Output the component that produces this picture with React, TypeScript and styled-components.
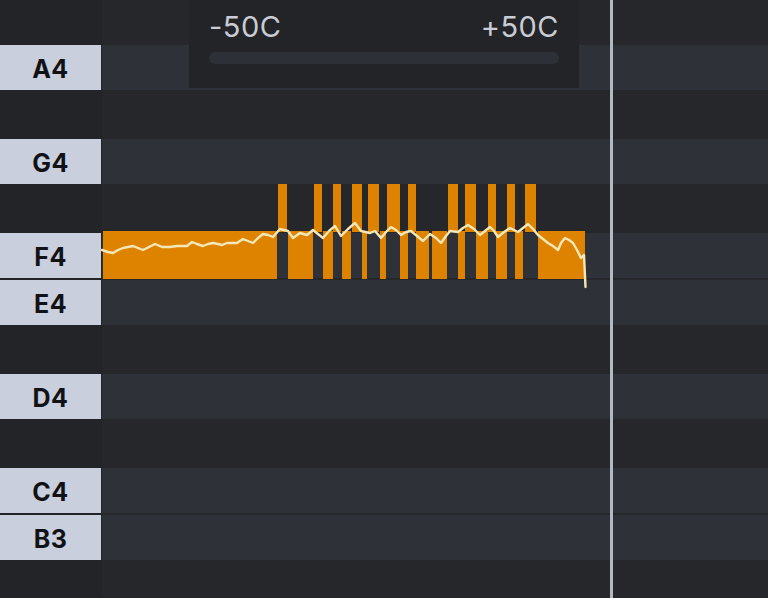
import styled, { createGlobalStyle } from "styled-components";

const ROW = 47;
const OFFSET = -2;
const GRID_LEFT = 102;

const GlobalStyle = createGlobalStyle`
  html, body {
    margin: 0;
    padding: 0;
    background: #232428;
  }
  body {
    font-family: Inter, "Liberation Sans", Arial, sans-serif;
  }
`;

type Pitch = { name: string; black: boolean };

const pitches: Pitch[] = [
  { name: "A#4", black: true },
  { name: "A4", black: false },
  { name: "G#4", black: true },
  { name: "G4", black: false },
  { name: "F#4", black: true },
  { name: "F4", black: false },
  { name: "E4", black: false },
  { name: "D#4", black: true },
  { name: "D4", black: false },
  { name: "C#4", black: true },
  { name: "C4", black: false },
  { name: "B3", black: false },
  { name: "A#3", black: true },
];

// [start x, end x] in page pixels
const f4Notes: [number, number][] = [
  [103, 277], [288, 313], [323, 333], [342, 351], [362, 367], [380, 386],
  [400, 408], [416, 429], [432, 447], [458, 465], [476, 488], [496, 507],
  [515, 523], [538, 585],
];

const fs4Notes: [number, number][] = [
  [278, 287], [314, 322], [333, 341], [352, 362], [368, 379], [387, 400],
  [408, 416], [448, 458], [465, 476], [488, 496], [507, 515], [525, 536],
];

const curve = [
  [102, 250], [108, 252], [113, 253], [118, 250], [123, 248], [128, 247],
  [133, 246], [138, 248], [143, 250], [149, 247], [155, 244], [162, 247],
  [170, 247], [177, 246], [187, 246], [192, 242], [197, 244], [203, 246],
  [208, 244], [213, 243], [218, 244], [222, 245], [227, 243], [237, 243],
  [243, 239], [248, 241], [253, 243], [258, 238], [263, 234], [268, 235],
  [273, 237], [280, 229], [288, 231], [293, 238], [300, 233], [307, 235],
  [313, 230], [318, 234], [323, 238], [329, 231], [335, 226], [341, 236],
  [348, 229], [355, 223], [361, 231], [370, 233], [375, 231], [381, 238],
  [386, 232], [391, 227], [396, 230], [401, 235], [406, 232], [411, 231],
  [417, 236], [423, 241], [430, 234], [436, 238], [441, 243], [446, 236],
  [450, 231], [458, 232], [463, 228], [468, 225], [474, 229], [480, 235],
  [485, 231], [490, 227], [494, 231], [498, 237], [504, 232], [510, 228],
  [518, 232], [523, 228], [528, 224], [533, 229], [538, 235], [548, 243],
  [553, 246], [558, 250], [561, 243], [565, 238], [569, 240], [573, 243],
  [577, 250], [581, 258], [584, 255], [585.5, 287],
];

const rowTop = (name: string) =>
  OFFSET + pitches.findIndex((p) => p.name === name) * ROW;

export default function App() {
  return (
    <>
      <GlobalStyle />
      <Screen>
        <Rows>
          {pitches.map((p) => (
            <Row key={p.name}>
              <KeyCell>{!p.black && <Key>{p.name}</Key>}</KeyCell>
              <Lane $black={p.black} />
            </Row>
          ))}
        </Rows>

        {fs4Notes.map(([a, b]) => (
          <Note
            key={"fs" + a}
            style={{ left: a, width: b - a, top: rowTop("F#4") - 2, height: 48 }}
          />
        ))}
        {f4Notes.map(([a, b]) => (
          <Note
            key={"f" + a}
            style={{ left: a, width: b - a, top: rowTop("F4") - 2, height: 48 }}
          />
        ))}

        <Curve width="768" height="598" viewBox="0 0 768 598">
          <polyline
            points={curve.map(([x, y]) => `${x},${y}`).join(" ")}
            fill="none"
            stroke="#f6e7b8"
            strokeWidth="2.4"
            strokeLinejoin="round"
            strokeLinecap="round"
          />
        </Curve>

        <Tuner>
          <TunerLabels>
            <span>-50C</span>
            <span>+50C</span>
          </TunerLabels>
          <Track />
        </Tuner>

        <Playhead />
      </Screen>
    </>
  );
}

const Screen = styled.div`
  position: relative;
  width: 768px;
  height: 598px;
  overflow: hidden;
  background: #232428;
`;

const Rows = styled.div`
  display: flex;
  flex-direction: column;
  margin-top: ${OFFSET}px;
`;

const Row = styled.div`
  display: flex;
  height: ${ROW}px;
  flex-shrink: 0;
`;

const KeyCell = styled.div`
  width: ${GRID_LEFT}px;
  flex-shrink: 0;
  background: #232428;
`;

const Key = styled.div`
  width: 101px;
  height: 45px;
  box-sizing: border-box;
  padding-top: 2px;
  background: #c9cfdc;
  color: #111216;
  font-weight: 700;
  font-size: 25px;
  letter-spacing: 0.5px;
  display: flex;
  align-items: center;
  justify-content: center;
`;

const Lane = styled.div<{ $black: boolean }>`
  flex: 1;
  height: 45px;
  background: ${(p) => (p.$black ? "#25272b" : "#2f3138")};
  border-bottom: 2px solid #25272b;
`;

const Note = styled.div`
  position: absolute;
  background: #de8300;
  box-sizing: border-box;
`;

const Curve = styled.svg`
  position: absolute;
  left: 0;
  top: 0;
`;

const Tuner = styled.div`
  position: absolute;
  left: 189px;
  top: 0;
  width: 390px;
  height: 88px;
  background: #232427;
  box-sizing: border-box;
  padding: 9px 20px 0 20px;
  display: flex;
  flex-direction: column;
  gap: 8px;
`;

const TunerLabels = styled.div`
  display: flex;
  justify-content: space-between;
  color: #c9ccd4;
  font-size: 29px;
  line-height: 35px;
  letter-spacing: 0.5px;
`;

const Track = styled.div`
  height: 12px;
  border-radius: 6px;
  background: #2e3037;
`;

const Playhead = styled.div`
  position: absolute;
  left: 610px;
  top: 0;
  width: 3px;
  height: 100%;
  background: #b4b8c3;
`;
